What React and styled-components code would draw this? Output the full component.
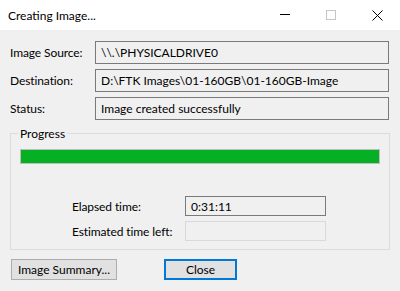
import React from 'react'
import styled, { createGlobalStyle } from 'styled-components'

const GlobalStyle = createGlobalStyle`
  html, body {
    margin: 0;
    padding: 0;
    background: #f0f0f0;
  }
  * {
    box-sizing: border-box;
  }
`

const Window = styled.div`
  width: 400px;
  height: 291px;
  background: #f0f0f0;
  font-family: Lato, 'Noto Sans', sans-serif;
  font-size: 12px;
  color: #000;
  display: flex;
  flex-direction: column;
  overflow: hidden;
`

const TitleBar = styled.div`
  height: 30px;
  background: #fff;
  display: flex;
  align-items: center;
  padding-left: 8px;
`

const Title = styled.div`
  flex: 1;
  font-size: 12px;
  color: #000;
`

const CaptionButton = styled.div`
  width: 46px;
  height: 30px;
  display: flex;
  align-items: center;
  justify-content: center;
`

const Body = styled.div`
  padding: 11px 10px 0 10px;
  display: flex;
  flex-direction: column;
`

const InfoGrid = styled.div`
  display: grid;
  grid-template-columns: 85px 294px;
  row-gap: 5px;
  align-items: center;
`

const Label = styled.div`
  white-space: nowrap;
  letter-spacing: -0.1px;
`

const Field = styled.div`
  height: ${props => props.h || 23}px;
  border: 1px solid ${props => (props.disabled ? '#d9d9d9' : '#7a7a7a')};
  background: #f0f0f0;
  display: flex;
  align-items: center;
  padding-left: 5px;
  white-space: nowrap;
  overflow: hidden;
`

const Group = styled.fieldset`
  margin: 6px 0 0 0;
  padding: 8px 9px 8px 9px;
  border: 1px solid #dcdcdc;
  min-width: 0;
  width: 380px;
`

const Legend = styled.legend`
  padding: 0 2px;
  margin-left: -2px;
  color: #000;
  font-size: 12px;
`

const ProgressBar = styled.div`
  height: 15px;
  border: 1px solid #bcbcbc;
  background: #e6e6e6;
  display: flex;
`

const ProgressFill = styled.div`
  background: #06b025;
  height: 100%;
`

const TimeGrid = styled.div`
  margin: 32px 0 0 52px;
  display: grid;
  grid-template-columns: 113px 141px;
  row-gap: 5px;
  align-items: center;
`

const ButtonRow = styled.div`
  display: flex;
  margin-top: 9px;
  padding-left: 1px;
  gap: 47px;
`

const Button = styled.button`
  height: 21px;
  width: ${props => props.w}px;
  background: #e1e1e1;
  border: ${props => (props.primary ? '2px solid #0078d7' : '1px solid #adadad')};
  font-family: inherit;
  font-size: 12px;
  color: #000;
  padding: 0;
  display: flex;
  align-items: center;
  justify-content: center;
`

const MinimizeIcon = () => (
  <svg width="10" height="10" viewBox="0 0 10 10">
    <rect x="0" y="4" width="10" height="1" fill="#000" />
  </svg>
)

const MaximizeIcon = () => (
  <svg width="10" height="10" viewBox="0 0 10 10">
    <rect x="0.5" y="0.5" width="9" height="9" fill="none" stroke="#c6c6c6" />
  </svg>
)

const CloseIcon = () => (
  <svg width="11" height="11" viewBox="0 0 11 11">
    <path d="M0.5 0.5 L10.5 10.5 M10.5 0.5 L0.5 10.5" stroke="#000" strokeWidth="1" fill="none" />
  </svg>
)

const info = [
  { label: 'Image Source:', value: '\\\\.\\PHYSICALDRIVE0' },
  { label: 'Destination:', value: 'D:\\FTK Images\\01-160GB\\01-160GB-Image' },
  { label: 'Status:', value: 'Image created successfully' },
]

export default function App() {
  return (
    <>
      <GlobalStyle />
      <Window>
        <TitleBar>
          <Title>Creating Image...</Title>
          <CaptionButton><MinimizeIcon /></CaptionButton>
          <CaptionButton><MaximizeIcon /></CaptionButton>
          <CaptionButton><CloseIcon /></CaptionButton>
        </TitleBar>
        <Body>
          <InfoGrid>
            {info.map(row => (
              <React.Fragment key={row.label}>
                <Label>{row.label}</Label>
                <Field>{row.value}</Field>
              </React.Fragment>
            ))}
          </InfoGrid>
          <Group>
            <Legend>Progress</Legend>
            <ProgressBar>
              <ProgressFill style={{ width: '100%' }} />
            </ProgressBar>
            <TimeGrid>
              <Label>Elapsed time:</Label>
              <Field h={20}>0:31:11</Field>
              <Label>Estimated time left:</Label>
              <Field h={20} disabled />
            </TimeGrid>
          </Group>
          <ButtonRow>
            <Button w={106}>Image Summary...</Button>
            <Button w={73} primary>Close</Button>
          </ButtonRow>
        </Body>
      </Window>
    </>
  )
}
